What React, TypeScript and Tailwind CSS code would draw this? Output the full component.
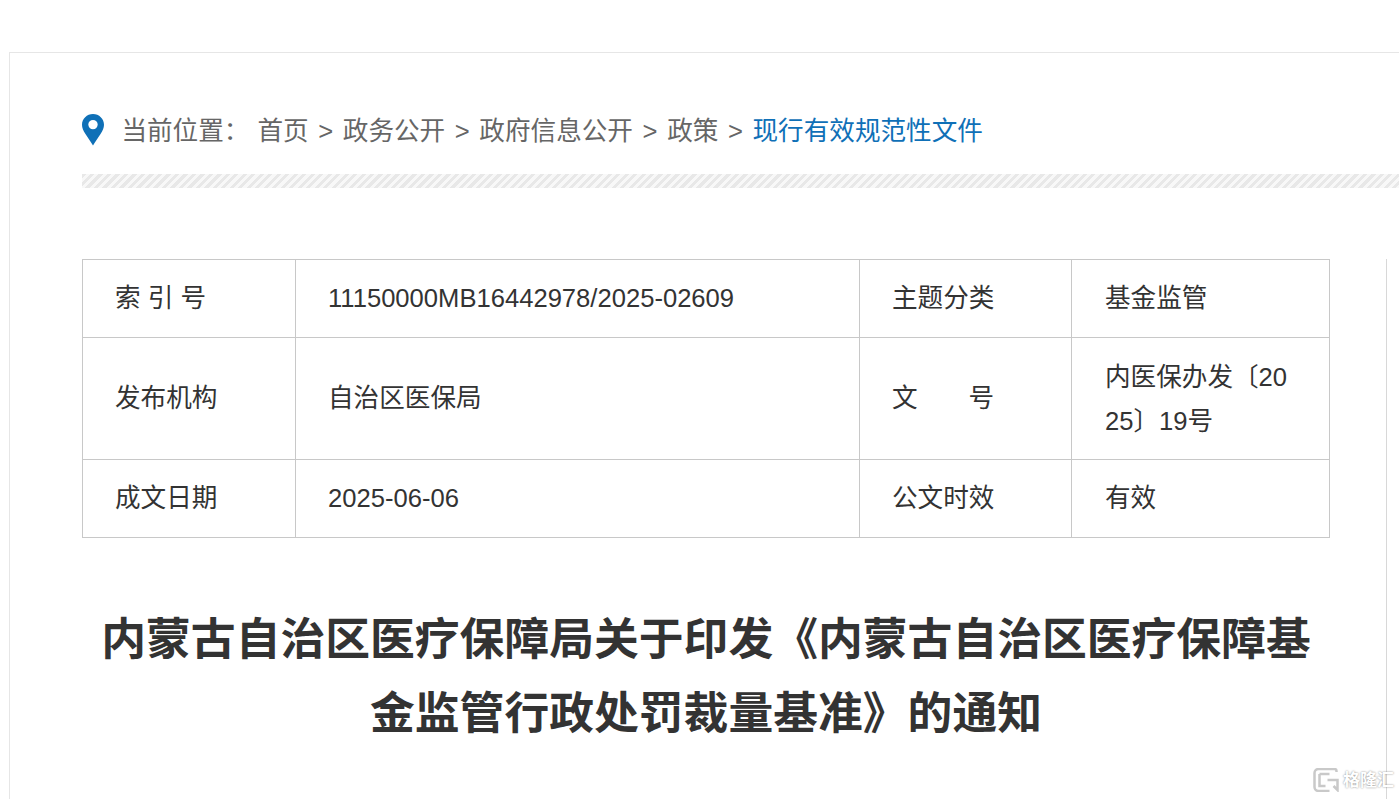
const crumbs = ["首页", "政务公开", "政府信息公开", "政策"];

function PinIcon() {
  return (
    <svg width="22" height="32" viewBox="0 0 22 32" className="shrink-0 -translate-y-px">
      <path
        fillRule="evenodd"
        fill="#0f70b7"
        d="M11 0C4.900 0 0 4.800 0 10.800c0 3.200 1.300 5.900 3.300 8.900C5.600 23.200 8.600 27.500 11 31.500c2.400-4 5.400-8.300 7.700-11.800 2-3 3.300-5.700 3.300-8.900C22 4.800 17.100 0 11 0zm0 15.300a4.700 4.700 0 1 1 0-9.400 4.700 4.700 0 0 1 0 9.400z"
      />
    </svg>
  );
}

function Breadcrumb() {
  return (
    <div className="flex h-[32px] items-center text-[25.6px] text-[#666]">
      <PinIcon />
      <span className="ml-[17.4px] w-[136px]">当前位置：</span>
      {crumbs.map((c) => (
        <span key={c} className="flex items-center">
          <span>{c}</span>
          <span className="w-[34.2px] text-center">&gt;</span>
        </span>
      ))}
      <span className="text-[#0f70b7]">现行有效规范性文件</span>
    </div>
  );
}

function InfoTable() {
  const cell = "border border-[#c8c8c8] pr-[32px] pl-[32px] pb-[2px] text-left font-normal";
  const lastCell = "border border-[#c8c8c8] pr-[32px] pl-[33px] pb-[2px] text-left font-normal";
  return (
    <table className="w-[1247px] table-fixed border-collapse text-[25.6px] leading-[44px] text-[#333]">
      <colgroup>
        <col className="w-[213px]" />
        <col className="w-[564px]" />
        <col className="w-[212px]" />
        <col className="w-[258px]" />
      </colgroup>
      <tbody>
        <tr className="h-[78px]">
          <td className={cell}>索 引 号</td>
          <td className={cell}>11150000MB16442978/2025-02609</td>
          <td className={cell}>主题分类</td>
          <td className={lastCell}>基金监管</td>
        </tr>
        <tr className="h-[122px]">
          <td className={cell}>发布机构</td>
          <td className={cell}>自治区医保局</td>
          <td className={cell}>
            <div className="flex w-[102px] justify-between">
              <span>文</span>
              <span>号</span>
            </div>
          </td>
          <td className="border border-[#c8c8c8] pr-[32px] pl-[33px] text-left font-normal break-all">
            内医保办发〔2025〕19号
          </td>
        </tr>
        <tr className="h-[78px]">
          <td className={cell}>成文日期</td>
          <td className={cell}>2025-06-06</td>
          <td className={cell}>公文时效</td>
          <td className={lastCell}>有效</td>
        </tr>
      </tbody>
    </table>
  );
}

function Watermark() {
  return (
    <div className="absolute right-[5px] bottom-[7px] flex items-center gap-[3px] text-[17px] leading-none font-bold text-white [text-shadow:0_0_2px_#808080]">
      <svg width="27" height="24" viewBox="0 0 26 24" fill="none">
        <path
          d="M23 4V3a2 2 0 0 0-2-2H5a4 4 0 0 0-4 4v14a4 4 0 0 0 4 4h11M6 6h10M6 6v12h6M14 12h10v10l-4-4"
          stroke="#c9c9c9"
          strokeWidth="2.500"
        />
      </svg>
      <span>格隆汇</span>
    </div>
  );
}

export default function App() {
  return (
    <div className="relative h-[799px] w-[1399px] overflow-hidden bg-white pt-[52px] pl-[9px] font-['Liberation_Sans','Noto_Sans_CJK_SC',sans-serif]">
      <div className="h-full border-t border-l border-[#e6e6e6] pt-[62px] pl-[72px]">
        <Breadcrumb />
        <div className="mt-[27px] h-[14px] bg-[repeating-linear-gradient(135deg,#e8e8e8_0,#e8e8e8_3px,#f8f8f8_3px,#f8f8f8_6px)]" />
        <div className="mt-[71px] flex">
          <div className="w-[1248px] shrink-0">
            <InfoTable />
            <h1 className="mt-[64px] text-center text-[44.800px] leading-[74px] font-bold text-[#333]">
              内蒙古自治区医疗保障局关于印发《内蒙古自治区医疗保障基金监管行政处罚裁量基准》的通知
            </h1>
          </div>
          <div className="ml-[56px] h-[600px] w-px bg-[#d8d8d8]" />
        </div>
      </div>
      <Watermark />
    </div>
  );
}
